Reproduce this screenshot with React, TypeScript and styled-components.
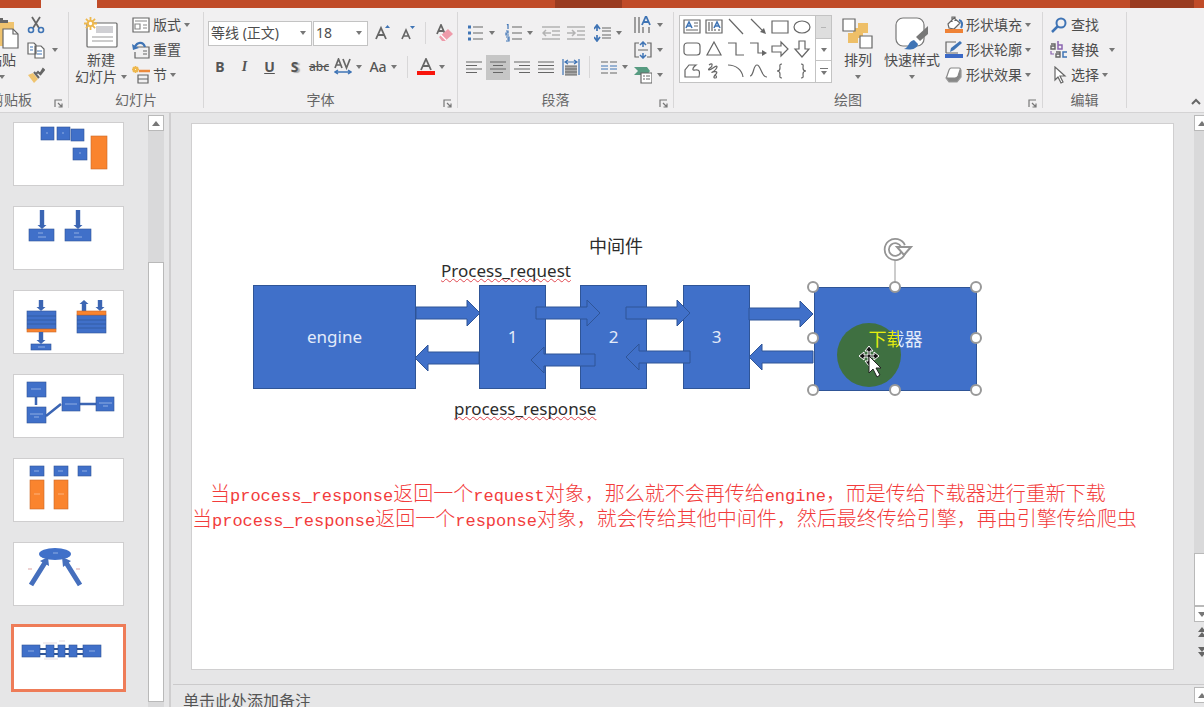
import React from 'react';
import styled, { createGlobalStyle, css } from 'styled-components';

const BLUE = '#4070c9';
const EDGE = '#2f5597';
const ORANGE = '#fa842e';
const INK = '#666';
const ACCENT = '#3f74b5';

const GlobalStyle = createGlobalStyle`
  * { box-sizing: border-box; }
  body {
    margin: 0;
    overflow: hidden;
    background: #e6e6e7;
    color: #4d4d4d;
    font-family: "Noto Sans", "Noto Sans CJK SC", sans-serif;
    font-size: 14px;
    line-height: 18px;
  }
  button, select { font: inherit; color: inherit; }
`;

const Shell = styled.div`
  display: flex;
  flex-direction: column;
  height: 100vh;
  overflow: hidden;
`;

/* ---------- title strip ---------- */
const TitleStrip = styled.div`
  display: flex;
  flex: none;
  height: 8px;
  background: #c04b28;
`;
const StripPart = styled.div<{ $w?: number; $tone?: 'tab' | 'dark' }>`
  flex: ${p => (p.$w ? `0 0 ${p.$w}px` : '1')};
  background: ${p => (p.$tone === 'tab' ? '#f1f0f0' : p.$tone === 'dark' ? '#993b20' : 'transparent')};
`;

/* ---------- ribbon ---------- */
const Ribbon = styled.div`
  display: flex;
  flex: none;
  height: 105px;
  padding: 4px 0;
  background: #f1f0f1;
  border-bottom: 1px solid #d4d3d4;
`;
const Group = styled.section<{ $w: number; $cut?: number }>`
  display: flex;
  flex-direction: column;
  flex: 0 0 ${p => p.$w}px;
  margin-left: ${p => (p.$cut ? -p.$cut : 0)}px;
  overflow: hidden;
  border-right: 1px solid #d8d7d8;
`;
const GroupBody = styled.div<{ $end?: boolean; $pad?: number }>`
  display: flex;
  height: 80px;
  padding-left: ${p => p.$pad ?? 0}px;
  justify-content: ${p => (p.$end ? 'flex-end' : 'flex-start')};
`;
const GroupFooter = styled.div<{ $launch?: boolean }>`
  display: grid;
  grid-template-columns: ${p => (p.$launch ? '1fr 20px' : '1fr')};
  height: 16px;
  align-items: center;
`;
const GroupLabel = styled.span`
  justify-self: center;
  color: #666;
  line-height: 16px;
  white-space: nowrap;
`;
const Column = styled.div<{ $w?: number; $pad?: number }>`
  display: flex;
  flex-direction: column;
  flex: none;
  width: ${p => (p.$w ? `${p.$w}px` : 'auto')};
  padding-left: ${p => p.$pad ?? 0}px;
`;
const Row = styled.div`
  display: flex;
  align-items: center;
  height: 34px;
`;
const Rows = styled.div`
  display: flex;
  flex-direction: column;
  flex: 1;
  padding: 4px 0 0 4px;
`;
const buttonReset = css`
  border: 0;
  padding: 0;
  background: transparent;
  white-space: nowrap;
`;
const LineButton = styled.button<{ $gap?: number }>`
  ${buttonReset}
  display: flex;
  align-items: center;
  gap: ${p => p.$gap ?? 3}px;
  height: 25px;
`;
const LaunchButton = styled.button`
  ${buttonReset}
  display: flex;
  align-items: flex-end;
  justify-content: center;
  height: 16px;
`;
const ToolButton = styled.button<{ $w?: number; $on?: boolean }>`
  ${buttonReset}
  display: flex;
  align-items: center;
  justify-content: center;
  flex: none;
  gap: 4px;
  width: ${p => p.$w ?? 25}px;
  height: 25px;
  background: ${p => (p.$on ? '#c6c6c6' : 'transparent')};
`;
const BigButton = styled.button<{ $w: number }>`
  ${buttonReset}
  display: flex;
  flex-direction: column;
  align-items: center;
  flex: none;
  width: ${p => p.$w}px;
  padding-top: 2px;
  line-height: 17px;
`;
const BigIcon = styled.span`
  display: flex;
  align-items: center;
  height: 37px;
`;
const BigText = styled.span`
  display: flex;
  align-items: center;
  gap: 4px;
  height: 17px;
`;
const Divider = styled.span`
  flex: none;
  width: 1px;
  height: 22px;
  margin: 0 6px;
  background: #d8d7d8;
`;
const Caret = styled.span<{ $far?: boolean }>`
  flex: none;
  margin-left: ${p => (p.$far ? 7 : 0)}px;
  border: 3px solid transparent;
  border-top: 4px solid #777;
  border-bottom: 0;
`;
const Glyph = styled.span<{ $kind?: 'bold' | 'italic' | 'under' | 'shadow' | 'strike' }>`
  color: #555;
  font-weight: ${p => (p.$kind === 'bold' || p.$kind === 'under' || p.$kind === 'shadow' ? 700 : 500)};
  font-size: ${p => (p.$kind === 'strike' ? 12 : 14)}px;
  ${p => p.$kind === 'italic' && 'font-family: "Liberation Serif", serif; font-style: italic; font-weight: 700;'}
  ${p => p.$kind === 'under' && 'text-decoration: underline;'}
  ${p => p.$kind === 'strike' && 'text-decoration: line-through;'}
  ${p => p.$kind === 'shadow' && 'text-shadow: 2px 1px 1px #aaa;'}
`;
const SelectBox = styled.label<{ $w: number }>`
  display: flex;
  align-items: center;
  flex: none;
  width: ${p => p.$w}px;
  height: 25px;
  padding-right: 5px;
  background: #fff;
  border: 1px solid #c3c3c3;
  margin-right: 1px;
`;
const Select = styled.select`
  appearance: none;
  flex: 1;
  min-width: 0;
  height: 23px;
  padding: 0 2px;
  border: 0;
  background: transparent;
  font-size: 14px;
`;
const Gallery = styled.div`
  display: flex;
  flex: none;
  width: 153px;
  height: 68px;
  margin-top: 3px;
  background: #fff;
  border: 1px solid #c3c3c3;
`;
const GalleryGrid = styled.div`
  display: grid;
  flex: 1;
  grid-template-columns: repeat(6, 22px);
  grid-template-rows: repeat(3, 22px);
  padding-left: 1px;
`;
const ShapeButton = styled.button`
  ${buttonReset}
  display: flex;
  align-items: center;
  justify-content: center;
`;
const GalleryScroll = styled.div`
  display: grid;
  flex: 0 0 16px;
  grid-template-rows: repeat(3, 1fr);
  border-left: 1px solid #c3c3c3;
`;
const GalleryStep = styled.button<{ $off?: boolean }>`
  ${buttonReset}
  display: flex;
  flex-direction: column;
  gap: 2px;
  align-items: center;
  justify-content: center;
  background: ${p => (p.$off ? '#dedede' : '#fff')};
  & + & { border-top: 1px solid #c3c3c3; }
`;
const Dash = styled.span<{ $faint?: boolean }>`
  width: ${p => (p.$faint ? 5 : 8)}px;
  height: 1px;
  background: ${p => (p.$faint ? '#b5b5b5' : '#777')};
`;
const RibbonEnd = styled.div`
  display: flex;
  flex: 1;
  align-items: flex-end;
  justify-content: flex-end;
  padding-right: 3px;
`;
const FoldButton = styled.button`
  ${buttonReset}
  height: 10px;
  display: flex;
`;

/* ---------- work area ---------- */
const Work = styled.div`
  display: grid;
  flex: 1;
  min-height: 0;
  grid-template-columns: 171px 1fr;
`;
const ThumbPane = styled.aside`
  display: grid;
  grid-template-columns: 1fr 16px;
  min-height: 0;
  padding-right: 5px;
  border-right: 2px solid #cfcecf;
`;
const ThumbList = styled.div`
  display: flex;
  flex-direction: column;
  gap: 20px;
  min-height: 0;
  overflow: hidden;
  padding: 9px 0 0 13px;
`;
const Thumb = styled.button<{ $active?: boolean }>`
  ${buttonReset}
  display: block;
  flex: none;
  width: 111px;
  height: 64px;
  background: #fff;
  outline: ${p => (p.$active ? '3px solid #ee7c58' : '1px solid #cfcecf')};
  outline-offset: -1px;
`;
const Scroll = styled.div`
  display: flex;
  flex-direction: column;
  width: 16px;
  min-height: 0;
  padding-top: 2px;
`;
const ScrollButton = styled.button`
  ${buttonReset}
  display: flex;
  align-items: center;
  justify-content: center;
  flex: none;
  height: 16px;
  background: #fff;
  border: 1px solid #b9b9b9;
`;
const Track = styled.div<{ $h?: number }>`
  flex: ${p => (p.$h ? `0 0 ${p.$h}px` : '1')};
  background: #d9d9da;
`;
const Handle = styled.div<{ $h?: number }>`
  flex: ${p => (p.$h ? `0 0 ${p.$h}px` : '1')};
  background: #fff;
  border: 1px solid #b9b9b9;
`;
const Editor = styled.main`
  display: grid;
  min-width: 0;
  min-height: 0;
  grid-template-rows: 1fr 23px;
`;
const Stage = styled.div`
  display: grid;
  min-height: 0;
  grid-template-columns: 1fr 10px;
  overflow: hidden;
`;
const StageBody = styled.div`
  display: flex;
  min-width: 0;
  padding: 10px 20px 14px 20px;
`;
const Slide = styled.article`
  flex: 1;
  min-width: 0;
  overflow: hidden;
  background: #fff;
  border: 1px solid #d0cfd0;
`;
const NotesBar = styled.div`
  display: grid;
  grid-template-columns: 1fr 10px;
  margin-left: 2px;
  overflow: hidden;
  border-top: 1px solid #cbcacb;
`;
const NotesText = styled.span`
  padding: 4px 10px 0;
  color: #555;
  font-size: 16px;
  line-height: 24px;
  white-space: nowrap;
`;
const PageJump = styled.div`
  display: grid;
  flex: 0 0 62px;
  grid-template-rows: 20px 20px;
`;
const JumpButton = styled.button`
  ${buttonReset}
  display: flex;
  align-items: center;
  justify-content: center;
`;

/* ---------- slide content ---------- */
const Canvas = styled.div`
  position: relative;
  height: 355px;
  margin: 1px 0 0 1px;
`;
const Node = styled.div<{ $x: number; $y: number; $w: number; $bare?: boolean }>`
  position: absolute;
  left: ${p => p.$x}px;
  top: ${p => p.$y}px;
  display: flex;
  align-items: center;
  justify-content: center;
  width: ${p => p.$w}px;
  height: 104px;
  background: ${p => (p.$bare ? 'transparent' : BLUE)};
  border: 1px solid ${p => (p.$bare ? 'transparent' : EDGE)};
  color: #e3ebf9;
  font-size: ${p => (p.$bare ? 18 : 17)}px;
  line-height: 24px;
`;
const Caption = styled.div<{ $x: number; $y: number; $checked?: boolean }>`
  position: absolute;
  left: ${p => p.$x}px;
  top: ${p => p.$y}px;
  color: #2c2c2c;
  font-size: ${p => (p.$checked ? 17 : 18)}px;
  line-height: 24px;
  white-space: nowrap;
  ${p => p.$checked && 'text-decoration: underline wavy #e0484f 1px; text-underline-offset: 1px; text-decoration-skip-ink: none;'}
`;
const Overlay = styled.svg`
  position: absolute;
  left: 0;
  top: 0;
  overflow: visible;
`;
const Lit = styled.span`
  color: #e6ee10;
`;
const HalfLit = styled.span`
  color: transparent;
  background: linear-gradient(90deg, #e6ee10 65%, #e3ebf9 65%);
  background-clip: text;
`;
const Remarks = styled.div`
  color: #f23c3c;
  font-family: "Noto Sans CJK SC", sans-serif;
  font-weight: 300;
  font-size: 20px;
  line-height: 25px;
  white-space: nowrap;
`;
const Remark = styled.p<{ $indent?: boolean }>`
  height: 25px;
  margin: 0;
  padding-left: ${p => (p.$indent ? 18 : 0)}px;
`;
const Code = styled.span`
  font-family: "Liberation Mono", monospace;
  font-weight: 400;
  font-size: 17px;
  line-height: 20px;
`;

/* ---------- drawings ---------- */
type IconProps = { w?: number; h?: number; children: React.ReactNode };
const Icon = ({ w = 18, h = 18, children }: IconProps) => (
  <svg width={w} height={h} viewBox={`0 0 ${w} ${h}`} fill="none" stroke={INK} strokeWidth="1.2" aria-hidden="true">
    {children}
  </svg>
);

const UpMark = () => <Icon w={8} h={5}><path d="M0 5l4-5 4 5z" fill="#777" stroke="none" /></Icon>;
const DownMark = () => <Icon w={8} h={5}><path d="M0 0l4 5 4-5z" fill="#777" stroke="none" /></Icon>;
const Spark = ({ r }: { r: number }) => (
  <g stroke="#eeb84e" strokeWidth="1.8">
    <path d={`M${r} 0V${2 * r}M0 ${r}H${2 * r}M${r * 0.3} ${r * 0.3}L${r * 1.7} ${r * 1.7}M${r * 1.7} ${r * 0.3}L${r * 0.3} ${r * 1.7}`} />
    <circle cx={r} cy={r} r={r * 0.4} fill="#fff" />
  </g>
);

const lines = (spans: number[][], y0: number, step: number) =>
  spans.map(([a, b], i) => `M${a} ${y0 + i * step}H${b}`).join('');

const alignments: { name: string; spans: number[][] }[] = [
  { name: '左对齐', spans: [[1, 17], [1, 12], [1, 17], [1, 12]] },
  { name: '居中', spans: [[1, 17], [4, 14], [1, 17], [4, 14]] },
  { name: '右对齐', spans: [[1, 17], [6, 17], [1, 17], [6, 17]] },
  { name: '两端对齐', spans: [[1, 17], [1, 17], [1, 17], [1, 17]] },
];

const shapes: { name: string; art: React.ReactNode }[] = [
  { name: '文本框', art: <><path d="M1 2h16v13H1zM11 5h4M11 8h4M3 12h12" /><path d="M3 10l3-6 3 6M4 8h4" stroke={ACCENT} strokeWidth="1.6" /></> },
  { name: '竖排文本框', art: <><path d="M1 2h16v13H1zM4 4v9M7 4v9M10 11v2M14 11v2" /><path d="M9 10l3-6 3 6M10 8h4" stroke={ACCENT} strokeWidth="1.6" /></> },
  { name: '直线', art: <path d="M2 1l14 15" /> },
  { name: '箭头', art: <><path d="M2 1l13 13" /><path d="M17 16l-6-2 4-4z" fill={INK} stroke="none" /></> },
  { name: '矩形', art: <path d="M1 3h16v12H1z" /> },
  { name: '椭圆', art: <ellipse cx="9" cy="9" rx="8" ry="6" /> },
  { name: '圆角矩形', art: <rect x="1" y="3" width="16" height="12" rx="3" /> },
  { name: '三角形', art: <path d="M9 2l7 13H2z" /> },
  { name: '肘形连接符', art: <path d="M1 3h8v12h8" /> },
  { name: '肘形箭头', art: <><path d="M1 3h8v10h5" /><path d="M18 13l-5-3v6z" fill={INK} stroke="none" /></> },
  { name: '右箭头', art: <path d="M1 6h9V2l7 7-7 7v-4H1z" /> },
  { name: '下箭头', art: <path d="M6 1v8H2l7 8 7-8h-4V1z" /> },
  { name: '任意多边形', art: <path d="M2 15V8l4-5h7c-4 3-4 6-1 5 5-1 5 2 4 7z" /> },
  { name: '自由曲线', art: <path d="M4 3c4-3 4 1 1 3s-1 3 3 0 5-2 3 1-6 4-3 3 5 0 3 2-3 4-1 4 2-2 0-3" /> },
  { name: '弧形', art: <path d="M1 3c8 0 14 5 15 12" /> },
  { name: '曲线', art: <path d="M1 14C5 14 4 3 8 3s4 12 10 12" /> },
  { name: '左大括号', art: <path d="M11 2C8 2 9 4 9 6S8 9 6 9c2 0 3 1 3 3s-1 4 2 4" /> },
  { name: '右大括号', art: <path d="M8 2c3 0 2 2 2 4s1 3 3 3c-2 0-3 1-3 3s1 4-2 4" /> },
];

const box = (x: number, y: number, w: number, h: number, fill = BLUE) => (
  <rect key={`${x}-${y}`} x={x} y={y} width={w} height={h} fill={fill} stroke={fill === BLUE ? EDGE : '#c96a2a'} strokeWidth="0.6" />
);
const tinyArrow = (x: number, y1: number, y2: number) => {
  const d = y2 > y1 ? -1 : 1;
  return <path key={`${x}a${y1}`} d={`M${x - 2.2} ${y1}V${y2 + 4 * d}H${x - 4.5}L${x} ${y2}L${x + 4.5} ${y2 + 4 * d}H${x + 2.2}V${y1}z`} fill="#3b65b3" />;
};
const dash = (x: number, y: number, w = 5) => <path key={`${x}d${y}`} d={`M${x} ${y}h${w}`} stroke="#8fadE3" />;

const thumbs: React.ReactNode[] = [
  <>{box(28, 5, 13, 13)}{box(44, 5, 13, 13)}{box(58, 7, 13, 12)}{box(60, 26, 14, 12)}{box(78, 14, 16, 33, ORANGE)}{dash(33, 11, 2)}{dash(49, 11, 2)}{dash(66, 31, 2)}</>,
  <>{tinyArrow(29, 4, 23)}{tinyArrow(65, 4, 23)}{box(16, 23, 25, 12)}{box(52, 23, 26, 12)}{dash(25, 27, 5)}{dash(25, 31, 8)}{dash(61, 27, 5)}{dash(61, 31, 8)}</>,
  <>{tinyArrow(28, 10, 21)}{box(14, 21, 29, 18)}{box(14, 39, 29, 3, ORANGE)}{tinyArrow(28, 42, 54)}{box(18, 54, 20, 6)}{dash(25, 57, 7)}
    {tinyArrow(71, 21, 10)}{tinyArrow(87, 10, 21)}{box(64, 25, 29, 18)}{box(64, 21, 29, 4, ORANGE)}
    <path d="M14 26h29M14 30h29M14 34h29M64 30h29M64 34h29M64 38h29" stroke={EDGE} strokeWidth="0.7" /></>,
  <><path d="M23 23v8M33 42l15-12M67 30h16" stroke="#3b65b3" strokeWidth="2.500" />{box(14, 8, 19, 15)}{box(14, 33, 19, 16)}{box(49, 23, 18, 14)}{box(83, 23, 18, 14)}
    {dash(18, 15, 10)}{dash(17, 40, 13)}{dash(21, 43, 5)}{dash(52, 30, 12)}{dash(86, 29, 13)}{dash(90, 32, 5)}</>,
  <>{box(17, 8, 14, 10)}{box(41, 8, 14, 10)}{box(65, 8, 13, 10)}{box(17, 22, 14, 29, ORANGE)}{box(41, 22, 14, 29, ORANGE)}
    {dash(21, 13)}{dash(45, 13)}{dash(69, 13)}<path d="M21 36h6M45 36h6" stroke="#fdb27c" /></>,
  <><ellipse cx="42" cy="12" rx="16" ry="6" fill={BLUE} /><path d="M18 43L33 19M67 43L52 19" stroke="#456fbd" strokeWidth="5" />
    <path d="M35 15l1 9-9-5zM49 15l9 4-8 6z" fill="#456fbd" />{dash(40, 11)}<path d="M15 27h4M63 27h4" stroke="#dba5a5" /></>,
  <><path d="M27 23h43M27 28h43" stroke={EDGE} strokeWidth="2" />{box(9, 19, 18, 12)}{box(33, 19, 8, 12)}{box(45, 19, 7, 12)}{box(56, 19, 8, 12)}{box(70, 19, 18, 12)}
    {dash(15, 25, 6)}{dash(76, 25, 6)}<path d="M30 17h14M31 33h14M46 15h6" stroke="#d5c5c9" strokeWidth="0.6" /></>,
];

const rightArrow = (x: number, y: number) => `M${x} ${y - 6}h51v-7l13 13-13 13v-7h-51z`;
const leftArrow = (x: number, y: number) => `M${x + 64} ${y - 6}h-51v-7l-13 13 13 13v-7h51z`;
const flow = [
  rightArrow(223, 188), rightArrow(343, 188), rightArrow(433, 188), rightArrow(556, 189),
  leftArrow(222, 233), leftArrow(338, 235), leftArrow(433, 232), leftArrow(556, 232),
];
const handles = [[620, 162], [702, 162], [783, 162], [620, 213], [783, 213], [620, 265], [702, 265], [783, 265]];

const Footer = ({ label, launch }: { label: string; launch?: boolean }) => (
  <GroupFooter $launch={launch}>
    <GroupLabel>{label}</GroupLabel>
    {launch && (
      <LaunchButton aria-label={`${label}设置`}>
        <Icon w={9} h={9}><path d="M1 8V1h7M4 4l4 4M8 4.500V8H4.500" stroke="#777" /></Icon>
      </LaunchButton>
    )}
  </GroupFooter>
);

export default function App() {
  return (
    <Shell>
      <GlobalStyle />
      <TitleStrip>
        <StripPart $w={41} /><StripPart $w={56} $tone="tab" /><StripPart $w={458} />
        <StripPart $w={67} $tone="dark" /><StripPart /><StripPart $w={64} $tone="dark" /><StripPart $w={10} />
      </TitleStrip>

      <Ribbon>
        <Group $w={95} $cut={26}>
          <GroupBody $end>
            <Column $w={40}>
              <BigButton $w={30}>
                <BigIcon>
                  <Icon w={36} h={34}>
                    <path d="M2 6h28v24H2z" fill="#efc36f" stroke="none" />
                    <path d="M8 7h16V4h-5V2h-6v2H8z" fill="#666" stroke="none" />
                    <path d="M19 13h10l5 5v14H19z" fill="#fff" /><path d="M29 13v5h5" />
                  </Icon>
                </BigIcon>
                <BigText>粘贴</BigText>
                <BigText><Caret /></BigText>
              </BigButton>
            </Column>
            <Column $w={41}>
              <LineButton aria-label="剪切">
                <Icon><path d="M5 1l7 11M13 1L6 12" strokeWidth="1.8" /><circle cx="4" cy="14" r="2.500" stroke={ACCENT} strokeWidth="1.600" /><circle cx="14" cy="14" r="2.500" stroke={ACCENT} strokeWidth="1.600" /></Icon>
              </LineButton>
              <LineButton $gap={7} aria-label="复制">
                <Icon><path d="M1 2h6l2 2v9H1zM8 5h6l3 3v9H8z" fill="#fff" /><path d="M3 6h3M3 9h3M10 10h5M10 13h5" stroke={ACCENT} /></Icon><Caret />
              </LineButton>
              <LineButton aria-label="格式刷">
                <Icon><path d="M1 9l5-2 5 6-4 4z" fill="#efc36f" stroke="none" /><path d="M7 6l5 6M9 8l2-2 2 2 3-5 1 1-4 5" stroke="#666" strokeWidth="2" /></Icon>
              </LineButton>
            </Column>
          </GroupBody>
          <Footer label="剪贴板" launch />
        </Group>

        <Group $w={135}>
          <GroupBody $pad={4}>
            <BigButton $w={56}>
              <BigIcon>
                <Icon w={34} h={32}>
                  <rect x="3" y="6" width="30" height="24" rx="1" fill="#fff" />
                  <path d="M12 9h17v7H12z" fill="#d0d0d4" stroke="none" /><path d="M8 20h21M8 24h21" stroke="#999" />
                  <Spark r={6.5} />
                </Icon>
              </BigIcon>
              <BigText>新建</BigText>
              <BigText>幻灯片<Caret /></BigText>
            </BigButton>
            <Column $pad={3}>
              <LineButton>
                <Icon><path d="M1 2h16v14H1z" fill="#fff" /><path d="M3 5h12M3 8h5v5H3zM11 9h4M11 12h4" stroke="#888" /></Icon>版式<Caret />
              </LineButton>
              <LineButton>
                <Icon><path d="M5 6h12v11H3v-6M11 10h4M11 13h4" /><path d="M13 6C11 0 5 1 3 6" stroke={ACCENT} strokeWidth="2.200" /><path d="M0 3l1 6 6-2z" fill={ACCENT} stroke="none" /></Icon>重置
              </LineButton>
              <LineButton>
                <Icon><path d="M6 9h10v8H6zM6 13h10" /><path d="M7 5h11" stroke="#ec8a3c" strokeWidth="2.500" /><Spark r={3.5} /></Icon>节<Caret />
              </LineButton>
            </Column>
          </GroupBody>
          <Footer label="幻灯片" />
        </Group>

        <Group $w={254}>
          <GroupBody>
            <Rows>
              <Row>
                <SelectBox $w={104}><Select aria-label="字体"><option>等线 (正文)</option></Select><Caret /></SelectBox>
                <SelectBox $w={55}><Select aria-label="字号"><option>18</option></Select><Caret /></SelectBox>
                <ToolButton aria-label="增大字号"><Icon><path d="M3 15L8 4l5 11M5 11h6" strokeWidth="1.8" /><path d="M12 4l2.500-3L17 4z" fill={ACCENT} stroke="none" /></Icon></ToolButton>
                <ToolButton aria-label="减小字号"><Icon><path d="M4 15l4-9 4 9M5.500 12h5" strokeWidth="1.7" /><path d="M12 2l2.500 3L17 2z" fill={ACCENT} stroke="none" /></Icon></ToolButton>
                <Divider />
                <ToolButton aria-label="清除格式"><Icon><path d="M1 10L5 1l4 9M2 7h5" strokeWidth="1.8" /><path d="M3 13l9-8 5 5-8 7H6z" fill="#ee9baa" stroke="none" /><path d="M5 11l5 5" stroke="#fff" /></Icon></ToolButton>
              </Row>
              <Row>
                <ToolButton $w={24} aria-label="加粗"><Glyph $kind="bold">B</Glyph></ToolButton>
                <ToolButton aria-label="倾斜"><Glyph $kind="italic">I</Glyph></ToolButton>
                <ToolButton aria-label="下划线"><Glyph $kind="under">U</Glyph></ToolButton>
                <ToolButton aria-label="阴影"><Glyph $kind="shadow">S</Glyph></ToolButton>
                <ToolButton $w={24} aria-label="删除线"><Glyph $kind="strike">abc</Glyph></ToolButton>
                <ToolButton $w={34} aria-label="字符间距">
                  <Icon><path d="M1 10l3.500-9L8 10M2 7h5M9 1l3.500 9L16 1" strokeWidth="1.700" /><path d="M2 14h14M4 12l-3 2 3 2M14 12l3 2-3 2" stroke={ACCENT} strokeWidth="1.500" /></Icon><Caret />
                </ToolButton>
                <ToolButton $w={36} aria-label="更改大小写"><Glyph>Aa</Glyph><Caret /></ToolButton>
                <Divider />
                <ToolButton $w={34} aria-label="字体颜色">
                  <Icon><path d="M4 12L9 1l5 11M6 8h6" strokeWidth="1.8" /><path d="M0 13h18v4H0z" fill="#f8150c" stroke="none" /></Icon><Caret />
                </ToolButton>
              </Row>
            </Rows>
          </GroupBody>
          <Footer label="字体" launch />
        </Group>

        <Group $w={216}>
          <GroupBody>
            <Rows>
              <Row>
                <ToolButton $w={38} aria-label="项目符号"><Icon><path d="M6 3h10M6 9h10M6 15h10" /><path d="M1 3h3M1 9h3M1 15h3" stroke={ACCENT} strokeWidth="3" /></Icon><Caret /></ToolButton>
                <ToolButton $w={38} aria-label="编号"><Icon><path d="M7 3h10M7 9h10M7 15h10" /><path d="M2 1l1-1v5M1 7h2v2H1v2h3M1 13h3v4H1M2 15h2" stroke={ACCENT} /></Icon><Caret /></ToolButton>
                <ToolButton aria-label="减少缩进"><Icon><path d="M0 3h18M10 7h8M10 11h8M0 15h18M1 9h8M4 6L1 9l3 3" stroke="#b3b3b3" strokeWidth="1.500" /></Icon></ToolButton>
                <ToolButton aria-label="增加缩进"><Icon><path d="M0 3h18M10 7h8M10 11h8M0 15h18M0 9h8M5 6l3 3-3 3" stroke="#b3b3b3" strokeWidth="1.500" /></Icon></ToolButton>
                <ToolButton $w={40} aria-label="行距"><Icon><path d="M8 4h9M8 7h9M8 11h9M8 14h9" /><path d="M3 1v6M0 5l3-4 3 4M3 11v6M0 13l3 4 3-4" stroke={ACCENT} strokeWidth="1.700" /></Icon><Caret /></ToolButton>
              </Row>
              <Row>
                {alignments.map(({ name, spans }, i) => (
                  <ToolButton key={name} $w={24} $on={i === 1} aria-label={name}><Icon><path d={lines(spans, 4, 3.5)} /></Icon></ToolButton>
                ))}
                <ToolButton aria-label="分散对齐"><Icon><path d="M3 8h12v9H3z" fill="#aaa" stroke="none" /><path d="M3 8h12M3 11h12M3 14h12M3 17h12" /><path d="M1 1v16M17 1v16M3 4h12M6 2L3 4l3 2M12 2l3 2-3 2" stroke={ACCENT} /></Icon></ToolButton>
                <Divider />
                <ToolButton $w={36} aria-label="分栏"><Icon><path d="M1 4h7M10 4h7M1 15h7M10 15h7" /><path d="M1 8h7M10 8h7M1 11h7M10 11h7" stroke={ACCENT} /></Icon><Caret /></ToolButton>
              </Row>
            </Rows>
            <Column $w={39}>
              <LineButton $gap={5} aria-label="文字方向"><Icon><path d="M1 1v16M5 1v16M9 11v6M15 11v6" /><path d="M8 9l4-9 4 9M9 6h6" stroke={ACCENT} strokeWidth="1.8" /></Icon><Caret /></LineButton>
              <LineButton $gap={5} aria-label="对齐文本"><Icon><path d="M5 2H1v14h4M13 2h4v14h-4M4 9h10" /><path d="M9 1v5M6 4l3-3 3 3M9 17v-5M6 14l3 3 3-3" stroke={ACCENT} strokeWidth="1.500" /></Icon><Caret /></LineButton>
              <LineButton $gap={5} aria-label="转换图形"><Icon><path d="M0 1h13l3 4-3 4H0l4-4z" fill="#579b81" stroke="none" /><path d="M7 7h11v10H7z" fill="#fff" /><path d="M9 10h2M12 10h4M9 13h2M12 13h4" /></Icon><Caret /></LineButton>
            </Column>
          </GroupBody>
          <Footer label="段落" launch />
        </Group>

        <Group $w={369}>
          <GroupBody $pad={5}>
            <Gallery>
              <GalleryGrid>
                {shapes.map(({ name, art }) => (
                  <ShapeButton key={name} aria-label={name}><Icon>{art}</Icon></ShapeButton>
                ))}
              </GalleryGrid>
              <GalleryScroll>
                <GalleryStep $off aria-label="上一行"><Dash $faint /></GalleryStep>
                <GalleryStep aria-label="下一行"><Caret /></GalleryStep>
                <GalleryStep aria-label="其他"><Dash /><Caret /></GalleryStep>
              </GalleryScroll>
            </Gallery>
            <BigButton $w={52}>
              <BigIcon>
                <Icon w={32} h={32}><path d="M16 6h10v10H16zM6 16h10v10H6z" fill="#eebf68" stroke="none" /><path d="M11 11h10v10H11z" fill="#eebf68" stroke="none" /><path d="M1 2h12v12H1zM18 19h12v12H18z" fill="#fff" /></Icon>
              </BigIcon>
              <BigText>排列</BigText>
              <BigText><Caret /></BigText>
            </BigButton>
            <BigButton $w={56}>
              <BigIcon>
                <Icon w={34} h={34}>
                  <rect x="1" y="2" width="28" height="28" rx="7" fill="#fff" stroke="#777" />
                  <path d="M33 10v8l-8 7-4-4z" fill="#777" stroke="none" /><path d="M20 22l4 4" stroke="#fff" strokeWidth="2" />
                  <path d="M9 33c5-1 4-8 10-9l4 4c-1 6-9 6-14 5z" fill={ACCENT} stroke="none" />
                </Icon>
              </BigIcon>
              <BigText>快速样式</BigText>
              <BigText><Caret /></BigText>
            </BigButton>
            <Column $pad={5}>
              <LineButton>
                <Icon><path d="M3 8l6-6 6 5-6 6-5-1zM7 6V1h3v4" fill="#fff" /><path d="M14 4c3 1 4 4 2 8" stroke={ACCENT} strokeWidth="2" /><path d="M0 13h18v4H0z" fill="#ef8236" stroke="none" /></Icon>形状填充<Caret />
              </LineButton>
              <LineButton>
                <Icon><path d="M11 1H1v11M1 12h12" /><path d="M5 11l1-4 9-7 2 2-8 7z" fill={ACCENT} stroke="none" /><path d="M0 13h18v4H0z" fill="#3b69c6" stroke="none" /></Icon>形状轮廓<Caret />
              </LineButton>
              <LineButton>
                <Icon><path d="M6 4h10v7l-4 5H4l-3-4z" fill="#888" stroke="#999" /><path d="M6 2h8q2 0 1 2l-2 6q-1 2-3 2H3q-2 0-1-2l2-6q1-2 2-2z" fill="#fff" stroke="#888" /></Icon>形状效果<Caret />
              </LineButton>
            </Column>
          </GroupBody>
          <Footer label="绘图" launch />
        </Group>

        <Group $w={84}>
          <GroupBody $pad={7}>
            <Column>
              <LineButton><Icon><circle cx="11" cy="7" r="4.500" stroke={ACCENT} strokeWidth="2" /><path d="M8 10l-6 6" stroke={ACCENT} strokeWidth="2.500" /></Icon>查找</LineButton>
              <LineButton>
                <Icon>
                  <path d="M1 3h4v5H1V5h4" strokeWidth="1.400" /><path d="M8 0v8h4V4H8" stroke="#8a64b0" strokeWidth="1.500" />
                  <path d="M6 11h4v5H6v-3h4" strokeWidth="1.400" /><path d="M17 11h-4v5h4" stroke={ACCENT} strokeWidth="1.500" /><path d="M1 10v3h3" stroke="#8a64b0" />
                </Icon>
                替换<Caret $far />
              </LineButton>
              <LineButton><Icon><path d="M5 1v13l3-3 3 6 2-1-3-6h5z" fill="#fff" /></Icon>选择<Caret /></LineButton>
            </Column>
          </GroupBody>
          <Footer label="编辑" />
        </Group>
        <RibbonEnd>
          <FoldButton aria-label="折叠功能区"><Icon w={10} h={8}><path d="M1 6l4-4 4 4" strokeWidth="2" /></Icon></FoldButton>
        </RibbonEnd>
      </Ribbon>

      <Work>
        <ThumbPane>
          <ThumbList>
            {thumbs.map((art, i) => (
              <Thumb key={i} $active={i === thumbs.length - 1} aria-label={`幻灯片 ${i + 1}`}>
                <svg width="111" height="64" viewBox="0 0 111 64" aria-hidden="true">{art}</svg>
              </Thumb>
            ))}
          </ThumbList>
          <Scroll>
            <ScrollButton aria-label="向上滚动"><UpMark /></ScrollButton>
            <Track $h={131} />
            <Handle />
            <Track $h={5} />
          </Scroll>
        </ThumbPane>

        <Editor>
          <Stage>
            <StageBody>
              <Slide>
                <Canvas>
                  <Caption $x={396} $y={109}>中间件</Caption>
                  <Caption $x={248} $y={134} $checked>Process_request</Caption>
                  <Node $x={60} $y={160} $w={163}>engine</Node>
                  <Node $x={286} $y={160} $w={67}>1</Node>
                  <Node $x={387} $y={160} $w={67}>2</Node>
                  <Node $x={490} $y={160} $w={67}>3</Node>
                  <Node $x={621} $y={162} $w={163} />
                  <Caption $x={261} $y={272} $checked>process_response</Caption>
                  <Overlay width="800" height="300" viewBox="0 0 800 300" aria-hidden="true">
                    {flow.map(d => <path key={d} d={d} fill={BLUE} stroke={EDGE} />)}
                    <circle cx="676" cy="230" r="32" fill="#3f7041" />
                    <path d="M702 135v22" stroke="#999" />
                    <path d="M710 121a8.500 8.500 0 1 0 0 7" fill="none" stroke="#949494" strokeWidth="6" />
                    <path d="M710 121a8.500 8.500 0 1 0 0 7" fill="none" stroke="#fff" strokeWidth="2.500" />
                    <path d="M704 122h14l-7 8z" fill="#fff" stroke="#949494" strokeWidth="2" />
                    {handles.map(([x, y]) => <circle key={`${x}-${y}`} cx={x} cy={y} r="5" fill="#fff" stroke="#999" strokeWidth="2" />)}
                  </Overlay>
                  <Node $x={621} $y={162} $w={163} $bare><Lit>下</Lit><HalfLit>载</HalfLit>器</Node>
                  <Overlay width="800" height="300" viewBox="0 0 800 300" aria-hidden="true">
                    <path d="M676 221l4 5h-3v4h4v-3l5 4-5 4v-3h-4v4h3l-4 5-4-5h3v-4h-4v3l-5-4 5-4v3h4v-4h-3z" fill="#111" stroke="#fff" strokeWidth="1" />
                    <path d="M676 231v17l4-4 4 8 3-2-4-7h5z" fill="#fff" stroke="#222" strokeWidth="1" />
                  </Overlay>
                </Canvas>
                <Remarks>
                  <Remark $indent>当<Code>process_response</Code>返回一个<Code>request</Code>对象，那么就不会再传给<Code>engine</Code>，而是传给下载器进行重新下载</Remark>
                  <Remark>当<Code>process_response</Code>返回一个<Code>response</Code>对象，就会传给其他中间件，然后最终传给引擎，再由引擎传给爬虫</Remark>
                </Remarks>
              </Slide>
            </StageBody>
            <Scroll>
              <ScrollButton aria-label="上一页"><UpMark /></ScrollButton>
              <Track />
              <Handle $h={53} />
              <ScrollButton aria-label="下一页"><DownMark /></ScrollButton>
              <PageJump>
                <JumpButton aria-label="上一张幻灯片"><Icon w={10} h={12}><path d="M1 6l4-5 4 5zM1 11l4-5 4 5z" fill="#666" stroke="none" /></Icon></JumpButton>
                <JumpButton aria-label="下一张幻灯片"><Icon w={10} h={12}><path d="M1 1l4 5 4-5zM1 6l4 5 4-5z" fill="#666" stroke="none" /></Icon></JumpButton>
              </PageJump>
            </Scroll>
          </Stage>
          <NotesBar>
            <NotesText>单击此处添加备注</NotesText>
            <Scroll><ScrollButton aria-label="备注向上滚动"><UpMark /></ScrollButton></Scroll>
          </NotesBar>
        </Editor>
      </Work>
    </Shell>
  );
}
